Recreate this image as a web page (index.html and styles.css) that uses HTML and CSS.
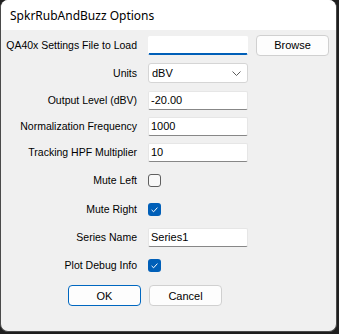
FILE: index.html
```html
<!DOCTYPE html>
<html>
<head>
<meta charset="utf-8">
<link rel="stylesheet" href="styles.css">
</head>
<body>
<div class="window">
  <div class="titlebar">SpkrRubAndBuzz Options</div>
  <div class="form">
    <label class="lbl">QA40x Settings File to Load</label>
    <div class="ctl file-row">
      <div class="textbox focused"></div>
      <button class="btn browse">Browse</button>
    </div>

    <label class="lbl">Units</label>
    <div class="ctl">
      <div class="select">
        <span>dBV</span>
        <svg class="chev" width="9" height="5" viewBox="0 0 9 5"><path d="M0.5 0.5 L4.5 4.5 L8.5 0.5" fill="none" stroke="#5c5c5c" stroke-width="1"/></svg>
      </div>
    </div>

    <label class="lbl">Output Level (dBV)</label>
    <div class="ctl"><div class="textbox">-20.00</div></div>

    <label class="lbl">Normalization Frequency</label>
    <div class="ctl"><div class="textbox">1000</div></div>

    <label class="lbl">Tracking HPF Multiplier</label>
    <div class="ctl"><div class="textbox">10</div></div>

    <label class="lbl">Mute Left</label>
    <div class="ctl"><span class="check"></span></div>

    <label class="lbl">Mute Right</label>
    <div class="ctl"><span class="check on"><svg width="13" height="13" viewBox="0 0 13 13"><path d="M3.6 6.9 L5.6 8.8 L9.4 4.6" fill="none" stroke="#ffffff" stroke-width="1"/></svg></span></div>

    <label class="lbl">Series Name</label>
    <div class="ctl"><div class="textbox">Series1</div></div>

    <label class="lbl">Plot Debug Info</label>
    <div class="ctl"><span class="check on"><svg width="13" height="13" viewBox="0 0 13 13"><path d="M3.6 6.9 L5.6 8.8 L9.4 4.6" fill="none" stroke="#ffffff" stroke-width="1"/></svg></span></div>

    <div class="actions">
      <button class="btn ok">OK</button>
      <button class="btn">Cancel</button>
    </div>
  </div>
</div>
</body>
</html>
```
FILE: styles.css
```css
html, body {
  margin: 0;
  padding: 0;
}
body {
  background: #1f1f1f;
  width: 339px;
  height: 334px;
  overflow: hidden;
}
.window {
  box-sizing: border-box;
  width: 337px;
  height: 332px;
  background: #f0f0f0;
  border: 1px solid #4a4a4a;
  border-top: 0;
  border-radius: 8px;
  overflow: hidden;
  font-family: "Liberation Sans", Arial, sans-serif;
  font-size: 10.5px;
  color: #000;
}
.titlebar {
  height: 30px;
  background: #ffffff;
  font-family: "Noto Sans", "Open Sans", sans-serif;
  font-size: 12px;
  line-height: 31px;
  padding-left: 9px;
  color: #000;
}
.form {
  display: grid;
  grid-template-columns: 136px 1fr;
  column-gap: 11px;
  grid-template-rows: 28px 28px 26px 26px 26px 30px 28px 28px 28px 33px;
  align-items: center;
  padding-top: 1px;
}
.lbl {
  text-align: right;
  white-space: nowrap;
}
.ctl {
  display: flex;
  align-items: center;
}
.file-row {
  gap: 8px;
}
.textbox {
  box-sizing: border-box;
  width: 100px;
  height: 19px;
  background: #fff;
  border: 1px solid #e6e6e6;
  border-bottom-color: #878787;
  border-radius: 2px;
  padding: 0 3px 0 2px;
  line-height: 17px;
  font-size: 11px;
}
.textbox.focused {
  height: 19px;
  border-color: #ffffff;
  border-bottom: 2px solid #005fb8;
}
.select {
  box-sizing: border-box;
  width: 100px;
  height: 20px;
  background: #fff;
  border: 1px solid #d5d5d5;
  border-radius: 3px;
  display: flex;
  align-items: center;
  justify-content: space-between;
  padding: 0 6px 0 3px;
  font-size: 11px;
}
.chev {
  display: block;
}
.check {
  box-sizing: border-box;
  width: 13px;
  height: 13px;
  border: 1px solid #5f5f5f;
  border-radius: 3px;
  background: #f8f8f8;
  display: block;
}
.check.on {
  border: 0;
  background: #005fb8;
}
.check svg {
  display: block;
}
.btn {
  box-sizing: border-box;
  width: 73px;
  height: 21px;
  background: #fdfdfd;
  border: 1px solid #d0d0d0;
  border-radius: 4px;
  font-family: "Liberation Sans", Arial, sans-serif;
  font-size: 11px;
  color: #000;
  padding: 0;
}
.browse {
  height: 21px;
}
.actions {
  grid-column: 1 / -1;
  display: flex;
  gap: 8px;
  padding-left: 67px;
}
.btn.ok {
  border-color: #0067c0;
}
```
